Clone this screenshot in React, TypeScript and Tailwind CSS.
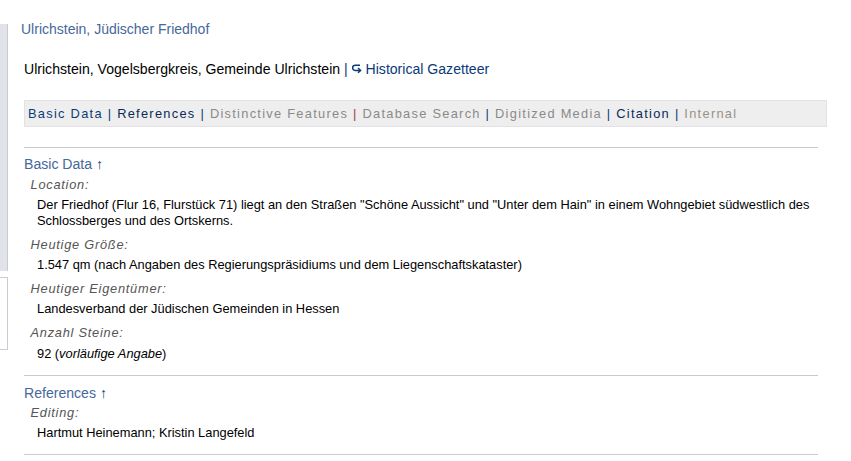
const font = { fontFamily: '"Liberation Sans", Arial, sans-serif' };

function Label({ children }: { children: React.ReactNode }) {
  return <div className="ml-[6.5px] text-[12.8px] leading-[16px] italic tracking-[0.76px] text-[#555]">{children}</div>;
}

function Value({ children }: { children: React.ReactNode }) {
  return <div className="ml-[13px] mt-[4.3px] mb-[7.8px] text-[12.83px] leading-[16px] text-black">{children}</div>;
}

function Sep() {
  return <span className="text-[#0b3a78]"> | </span>;
}

export default function App() {
  return (
    <div className="flex h-[461px] w-[851px] overflow-hidden bg-white" style={font}>
      {/* left column, cut off by the window */}
      <div className="flex w-[8px] shrink-0 flex-col gap-[6px] pt-[24px]">
        <div className="h-[247px] border-r border-[#c9ccd4] bg-[#e1e3e8]" />
        <div className="h-[73px] border-y border-r border-[#c9ccd4] bg-white" />
      </div>

      <div className="w-[819px] shrink-0 pl-[13px]">
        <div className="mt-[21px] text-[14px] leading-[16px] text-[#46689a]">Ulrichstein, Jüdischer Friedhof</div>

        <div className="ml-[3px] mt-[24px] text-[14.08px] leading-[16px] text-black">
          Ulrichstein, Vogelsbergkreis, Gemeinde Ulrichstein <span className="text-[#0b3a78]">|</span>{" "}
          <span className="text-[#0b3a78]">
            <svg className="inline-block align-[-1px]" width="10" height="11" viewBox="0 0 10 11" fill="none" stroke="currentColor" strokeWidth="1.5">
              <path d="M8 1.2H3.2a2.4 2.4 0 0 0 0 5.2h5" />
              <path d="M6 4 8.6 6.4 6 8.8" />
            </svg>{" "}
            Historical Gazetteer
          </span>
        </div>

        <div className="ml-[3px] mt-[23px] flex h-[27px] w-[803px] items-center border border-[#e2e2e6] bg-[#eeeeee] pl-[3px] text-[12.83px] tracking-[1.28px]">
          <span className="whitespace-pre">
            <span className="text-[#0b3a78]">Basic Data</span>
            <Sep />
            <span className="text-[#0b2a58]">References</span>
            <Sep />
            <span className="text-[#8a8a8a]">Distinctive Features</span>
            <span className="text-[#a04050]"> | </span>
            <span className="text-[#8a8a8a]">Database Search</span>
            <Sep />
            <span className="text-[#8a8a8a]">Digitized Media</span>
            <Sep />
            <span className="text-[#0b2a58]">Citation</span>
            <Sep />
            <span className="text-[#9a9088]">Internal</span>
          </span>
        </div>

        <div className="ml-[3px] mt-[20px] w-[794px] border-t border-[#c9c9d0]" />

        <div className="ml-[3px] mt-[8px] w-[794px]">
          <div className="text-[14.08px] leading-[16px] text-[#46689a]">
            Basic Data <span className="text-[#0b3a78]">↑</span>
          </div>
          <div className="mt-[5px]">
            <Label>Location:</Label>
            <Value>
              Der Friedhof (Flur 16, Flurstück 71) liegt an den Straßen "Schöne Aussicht" und "Unter dem Hain" in einem
              Wohngebiet südwestlich des Schlossberges und des Ortskerns.
            </Value>
            <Label>Heutige Größe:</Label>
            <Value>1.547 qm (nach Angaben des Regierungspräsidiums und dem Liegenschaftskataster)</Value>
            <Label>Heutiger Eigentümer:</Label>
            <Value>Landesverband der Jüdischen Gemeinden in Hessen</Value>
            <Label>Anzahl Steine:</Label>
            <Value>
              92 (<i>vorläufige Angabe</i>)
            </Value>
          </div>
        </div>

        <div className="ml-[3px] mt-[13px] w-[794px] border-t border-[#c9c9d0]" />

        <div className="ml-[3px] mt-[9px] w-[794px]">
          <div className="text-[14.08px] leading-[16px] text-[#46689a]">
            References <span className="text-[#0b3a78]">↑</span>
          </div>
          <div className="mt-[4.4px]">
            <Label>Editing:</Label>
            <Value>Hartmut Heinemann; Kristin Langefeld</Value>
          </div>
        </div>

        <div className="ml-[3px] mt-[13px] w-[794px] border-t border-[#c9c9d0]" />
      </div>
    </div>
  );
}
